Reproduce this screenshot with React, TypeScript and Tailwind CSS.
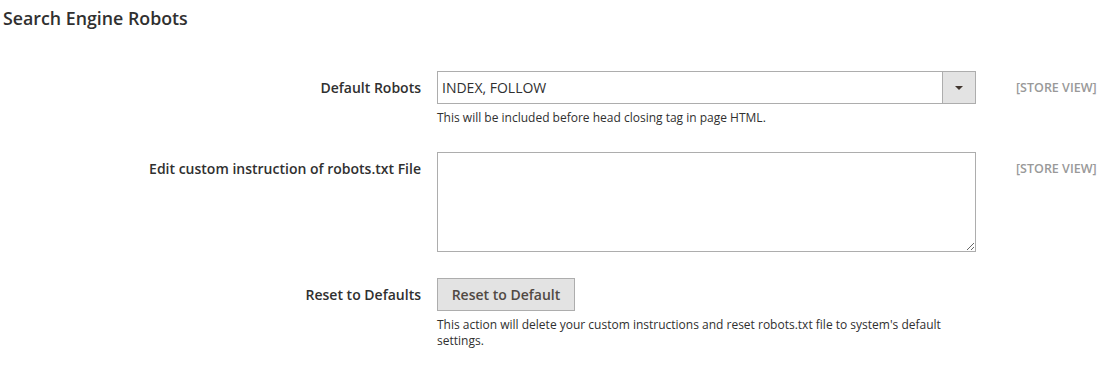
import { ReactElement } from 'react';

export default function App(): ReactElement {
    return (
        <div className="w-[1110px] h-[365px] bg-white text-[#303030] font-['Open_Sans',sans-serif] overflow-hidden">
            <h2 className="pl-[3px] pt-[6px] text-[17.8px] leading-[24px] font-semibold text-[#303030]">Search Engine Robots</h2>

            <div className="mt-[41px] flex">
                <label className="w-[421px] pt-[7px] text-right text-[14px] leading-[19px] font-semibold">Default Robots</label>
                <div className="ml-[16px] w-[539px]">
                    <div className="flex h-[33px] border border-[#adadad]">
                        <div className="flex-1 pl-[4px] text-[14px] leading-[31px]">INDEX, FOLLOW</div>
                        <div className="w-[33px] bg-[#e3e3e3] border-l border-[#adadad] flex items-center justify-center">
                            <div className="w-0 h-0 border-l-[4px] border-r-[4px] border-t-[4px] border-l-transparent border-r-transparent border-t-[#41362f]" />
                        </div>
                    </div>
                    <p className="mt-[6px] text-[12px] leading-[16px]">This will be included before head closing tag in page HTML.</p>
                </div>
                <span className="ml-[40px] pt-[9px] text-[12.5px] leading-[16px] font-semibold text-[#999]">[STORE VIEW]</span>
            </div>

            <div className="mt-[26px] flex">
                <label className="w-[421px] pt-[7px] text-right text-[14px] leading-[19px] font-semibold">Edit custom instruction of robots.txt File</label>
                <div className="ml-[16px] w-[539px]">
                    <textarea className="block w-full h-[100px] border border-[#adadad] outline-none resize-y" />
                </div>
                <span className="ml-[40px] pt-[9px] text-[12.5px] leading-[16px] font-semibold text-[#999]">[STORE VIEW]</span>
            </div>

            <div className="mt-[26px] flex">
                <label className="w-[421px] pt-[7px] text-right text-[14px] leading-[19px] font-semibold">Reset to Defaults</label>
                <div className="ml-[16px] w-[539px]">
                    <button className="h-[33px] w-[138px] bg-[#e3e3e3] border border-[#adadad] text-[14px] font-semibold text-[#514943]">Reset to Default</button>
                    <p className="mt-[6px] text-[12px] leading-[16px] pr-[30px]">This action will delete your custom instructions and reset robots.txt file to system's default settings.</p>
                </div>
            </div>
        </div>
    );
}
